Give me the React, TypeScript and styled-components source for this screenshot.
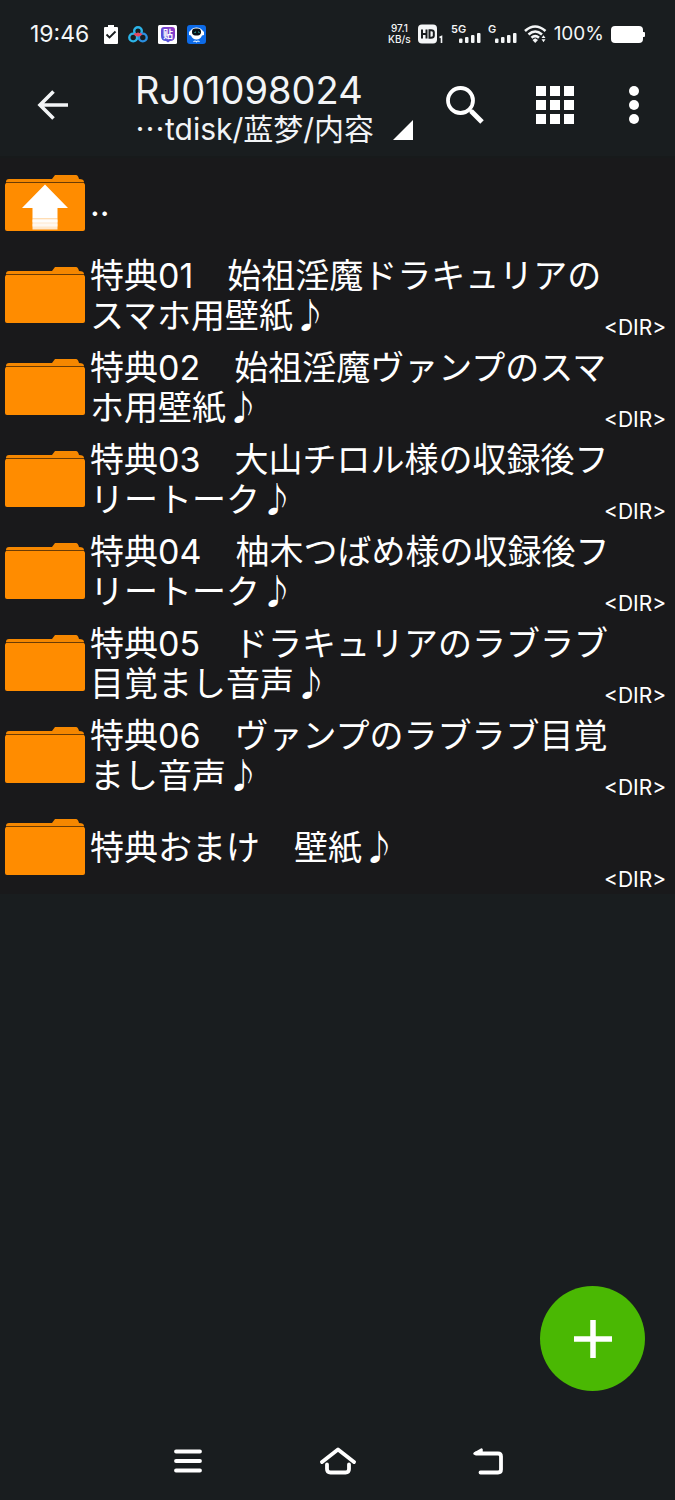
import React from "react";
import styled, { createGlobalStyle } from "styled-components";

const GlobalStyle = createGlobalStyle`
  *, *::before, *::after { box-sizing: border-box; }
  html { background: #191d1f; }
  body {
    margin: 0;
    color: #fff;
    font-family: Inter, "Noto Sans CJK JP", sans-serif;
  }
  button { font: inherit; color: inherit; }
`;

const Screen = styled.div`
  display: flex;
  flex-direction: column;
  min-height: 100vh;
  background: #191d1f;
`;

const StatusBar = styled.div`
  display: flex;
  align-items: center;
  justify-content: space-between;
  height: 68px;
  padding: 0 30px;
  color: #f4f6f7;
`;

const StatusGroup = styled.div<{ $gap: number }>`
  display: flex;
  align-items: center;
  gap: ${(p) => p.$gap}px;
`;

const Clock = styled.time`
  margin-right: 5px;
  font-size: 23px;
  line-height: 28px;
`;

const Speed = styled.div`
  font-size: 10px;
  line-height: 11px;
  font-weight: 500;
  text-align: center;
`;

const Battery = styled.span`
  font-size: 19px;
  line-height: 24px;
`;

const Toolbar = styled.header`
  display: flex;
  align-items: center;
  height: 90px;
  padding: 0 17px 14px 30px;
  border-bottom: 2px solid #171a1b;
  color: #f2f4f6;
`;

const IconButton = styled.button<{ $width: number }>`
  display: flex;
  flex: none;
  align-items: center;
  justify-content: center;
  width: ${(p) => p.$width}px;
  height: 60px;
  padding: 0;
  border: 0;
  background: none;
  cursor: pointer;
`;

const Location = styled.button`
  display: flex;
  flex: 1;
  align-items: flex-end;
  justify-content: space-between;
  min-width: 0;
  margin: 0 17px 0 59px;
  padding: 6px 0 0;
  border: 0;
  background: none;
  text-align: left;
  cursor: pointer;
`;

const LocationText = styled.span`
  display: flex;
  flex-direction: column;
  min-width: 0;
  white-space: nowrap;
`;

const FolderName = styled.span`
  font-size: 38px;
  line-height: 40px;
`;

const FolderPath = styled.span`
  font-family: Inter, "Noto Sans CJK SC", sans-serif;
  font-size: 30px;
  line-height: 34px;
`;

const Ellipsis = styled.span`
  font-family: "Noto Sans CJK SC", sans-serif;
`;

const Corner = styled.svg`
  flex: none;
  margin-bottom: 6px;
`;

const Actions = styled.div`
  display: flex;
`;

const FileList = styled.ul`
  margin: 0;
  padding: 0;
  list-style: none;
  background: #19191b;
`;

const Row = styled.li`
  display: flex;
  align-items: center;
  height: 92px;
  padding: 0 11px 0 5px;
`;

const FileLink = styled.a`
  display: flex;
  flex: 1;
  align-items: center;
  gap: 5px;
  min-width: 0;
  color: #fff;
  text-decoration: none;
`;

const FileName = styled.span`
  flex: 1;
  font-size: 34px;
  line-height: 40px;
`;

const Kind = styled.span`
  flex: none;
  align-self: flex-end;
  width: 60px;
  margin-left: -10px;
  font-size: 21px;
  line-height: 28px;
  text-align: right;
  white-space: nowrap;
`;

const AddButton = styled.button`
  position: fixed;
  right: 30px;
  bottom: 109px;
  display: flex;
  align-items: center;
  justify-content: center;
  width: 105px;
  height: 105px;
  padding: 0;
  border: 0;
  border-radius: 50%;
  background: #4ab803;
  cursor: pointer;
`;

const NavBar = styled.nav`
  display: flex;
  justify-content: center;
  gap: 90px;
  margin-top: auto;
  padding-bottom: 9px;
`;

const folders = [
  "特典01　始祖淫魔ドラキュリアのスマホ用壁紙♪",
  "特典02　始祖淫魔ヴァンプのスマホ用壁紙♪",
  "特典03　大山チロル様の収録後フリートーク♪",
  "特典04　柚木つばめ様の収録後フリートーク♪",
  "特典05　ドラキュリアのラブラブ目覚まし音声♪",
  "特典06　ヴァンプのラブラブ目覚まし音声♪",
  "特典おまけ　壁紙♪",
];

function FolderIcon({ up = false }: { up?: boolean }) {
  return (
    <svg width="80" height="58" viewBox="0 0 80 58" aria-hidden="true">
      <path d="M1 10V7q0-3 3-3h43l3-4h21q2 0 3 4 5 0 5 3v3z" fill="#f58700" />
      <rect y="8" width="80" height="48" rx="2" fill="#ff8c00" />
      <path d="M1 7.500h78" stroke="#6b3c05" strokeWidth="1" />
      {up && (
        <g fill="#fff">
          <path d="M40 9.500 63 33H52.500v10.500h-25V33H17z" />
          <path d="M27.500 43.500h25v11h-25z" opacity=".8" />
          <path d="M27.500 44.500h25v3h-25z" opacity=".9" />
          <path d="M27.500 48.500h25v3h-25z" opacity=".7" />
        </g>
      )}
    </svg>
  );
}

function ClipboardIcon() {
  return (
    <svg width="14" height="19" viewBox="0 0 14 19" aria-hidden="true">
      <path d="M1 2h3V0h6v2h3q1 0 1 1v15q0 1-1 1H1q-1 0-1-1V3q0-1 1-1z" fill="#fff" />
      <path d="m2.500 9.500 3 3 6-6" fill="none" stroke="#191d1f" strokeWidth="1.800" />
    </svg>
  );
}

function CloudDiskIcon() {
  return (
    <svg width="20" height="17" viewBox="0 0 20 17" fill="none" strokeWidth="2.400" aria-hidden="true">
      <circle cx="10" cy="5" r="3.800" stroke="#2cb4e8" />
      <circle cx="5.200" cy="11.500" r="3.900" stroke="#2cb4e8" />
      <circle cx="14.800" cy="11.500" r="3.900" stroke="#2a8fe0" />
      <path d="M6.500 7.500q1 1.500 3.500 1.500t3.500-1.500M8.500 10l1.500-2 1.500 2" stroke="#e8455c" />
    </svg>
  );
}

function ForumIcon() {
  return (
    <svg width="19" height="19" viewBox="0 0 19 19" aria-hidden="true">
      <defs>
        <linearGradient id="forum" x1="0" y1="1" x2="1" y2="0">
          <stop offset="0" stopColor="#3b5ae0" />
          <stop offset="1" stopColor="#9a35c4" />
        </linearGradient>
      </defs>
      <rect width="19" height="19" rx="1.500" fill="#fff" />
      <path d="M6 2h8q3 0 3 3v6q0 5-5 5l-2 1.500L8 16q-5 0-5-5V5q0-3 3-3z" fill="url(#forum)" />
      <text x="10" y="12.500" fill="#fff" fontFamily="Noto Sans CJK SC, sans-serif" fontSize="10" fontWeight="700" textAnchor="middle">贴</text>
    </svg>
  );
}

function RobotIcon() {
  return (
    <svg width="19" height="19" viewBox="0 0 19 19" aria-hidden="true">
      <rect width="19" height="19" rx="3" fill="#0d6be8" />
      <path d="M4 5q1.500-2.500 5.500-2.500T15 5l2 2v3l-2 .5q-1.500 4-5.500 4T4 10.500L2 10V7z" fill="#fff" />
      <path d="M6.500 16.800q1.500-1.600 3 0 1.500-1.600 3 0" fill="none" stroke="#dff0ff" strokeWidth="1.200" />
      <rect x="5" y="3.500" width="9" height="7" rx="3.400" fill="#071015" />
      <path d="M7.500 7.500q.5-1 1.500 0m2 0q.5-1 1.500 0" fill="none" stroke="#36c9b6" />
    </svg>
  );
}

function HdIcon() {
  return (
    <svg width="26" height="20" viewBox="0 0 26 20" aria-hidden="true">
      <rect y="0.500" width="19" height="19" rx="4" fill="#f4f6f7" />
      <path d="M4 5.500v9M8.500 5.500v9M4 10h4.500" fill="none" stroke="#191d1f" strokeWidth="2" />
      <path d="M11.500 6.300h1.500q2.800 0 2.800 2v3.400q0 2-2.800 2h-1.500z" fill="none" stroke="#191d1f" strokeWidth="2" />
      <path d="M21.500 13.500 23.500 12.500V19" fill="none" stroke="#f4f6f7" strokeWidth="1.600" />
    </svg>
  );
}

function SignalIcon({ label }: { label: string }) {
  const x = label.length > 1 ? 8 : 7;
  return (
    <svg width={x + 22} height="26" viewBox={`0 0 ${x + 22} 26`} fill="#f4f6f7" aria-hidden="true">
      <text x="0" y="12" fontFamily="Inter, sans-serif" fontSize="11" fontWeight="600">{label}</text>
      <rect x={x} y="17.500" width="3.500" height="4.500" rx="1" />
      <rect x={x + 6} y="16" width="3.500" height="6" rx="1" />
      <rect x={x + 12} y="14" width="3.500" height="8" rx="1" />
      <rect x={x + 18} y="12" width="3.500" height="10" rx="1" />
    </svg>
  );
}

function WifiIcon() {
  return (
    <svg width="23" height="18" viewBox="0 0 23 18" aria-hidden="true">
      <g fill="none" stroke="#f4f6f7" strokeWidth="2.600">
        <path d="M1 6q10-9 20.500 0" />
        <path d="M4.500 9.500q6.700-6 13.500 0" />
        <path d="M7.500 12.800q3.700-3.400 7.500 0" />
      </g>
      <path d="m8.500 15 2.700-1.800 2.800 1.800-2.800 3z" fill="#f4f6f7" />
      <path d="m17.500 13 2-2.800 2 2.800zM17.500 14.200h4l-2 3z" fill="#f4f6f7" />
    </svg>
  );
}

function BatteryIcon() {
  return (
    <svg width="34" height="17" viewBox="0 0 34 17" fill="#fff" aria-hidden="true">
      <rect width="32" height="17" rx="4" />
      <path d="M32 6h1q1 0 1 1v3q0 1-1 1h-1z" />
    </svg>
  );
}

export default function App() {
  return (
    <Screen>
      <GlobalStyle />
      <StatusBar>
        <StatusGroup $gap={10}>
          <Clock>19:46</Clock>
          <ClipboardIcon />
          <CloudDiskIcon />
          <ForumIcon />
          <RobotIcon />
        </StatusGroup>
        <StatusGroup $gap={7}>
          <Speed>97.1<br />KB/s</Speed>
          <HdIcon />
          <SignalIcon label="5G" />
          <SignalIcon label="G" />
          <WifiIcon />
          <Battery>100%</Battery>
          <BatteryIcon />
        </StatusGroup>
      </StatusBar>

      <Toolbar>
        <IconButton $width={46} aria-label="Back">
          <svg width="32" height="30" viewBox="0 0 32 30" fill="none" stroke="currentColor" strokeWidth="3.600">
            <path d="M31 15H3M16.500 1.500 3 15l13.500 13.500" />
          </svg>
        </IconButton>
        <Location>
          <LocationText>
            <FolderName>RJ01098024</FolderName>
            <FolderPath lang="zh-CN"><Ellipsis>…</Ellipsis>tdisk/蓝梦/内容</FolderPath>
          </LocationText>
          <Corner width="20" height="20" viewBox="0 0 20 20" aria-hidden="true">
            <path d="M20 0v20H0z" fill="#fff" />
          </Corner>
        </Location>
        <Actions>
          <IconButton $width={70} aria-label="Search">
            <svg width="38" height="38" viewBox="0 0 38 38" fill="none" stroke="#fff">
              <circle cx="14.500" cy="14.500" r="12.500" strokeWidth="3.800" />
              <path d="m23 23 3 3" strokeWidth="3" />
              <path d="m25 25 11 11" strokeWidth="5" />
            </svg>
          </IconButton>
          <IconButton $width={110} aria-label="Grid view">
            <svg width="38" height="38" viewBox="0 0 38 38" fill="#fff">
              {[0, 14, 28].map((y) =>
                [0, 14, 28].map((x) => <rect key={`${x}-${y}`} x={x} y={y} width="10" height="10" />)
              )}
            </svg>
          </IconButton>
          <IconButton $width={48} aria-label="More options">
            <svg width="10" height="38" viewBox="0 0 10 38" fill="#fff">
              <circle cx="5" cy="5" r="5" />
              <circle cx="5" cy="19" r="5" />
              <circle cx="5" cy="33" r="5" />
            </svg>
          </IconButton>
        </Actions>
      </Toolbar>

      <FileList>
        <Row>
          <FileLink href="#">
            <FolderIcon up />
            <FileName>..</FileName>
          </FileLink>
        </Row>
        {folders.map((name) => (
          <Row key={name}>
            <FileLink href="#">
              <FolderIcon />
              <FileName>{name}</FileName>
            </FileLink>
            <Kind>&lt;DIR&gt;</Kind>
          </Row>
        ))}
      </FileList>

      <AddButton aria-label="Add">
        <svg width="38" height="38" viewBox="0 0 38 38" stroke="#fff" strokeWidth="5.500">
          <path d="M0 19h38M19 0v38" />
        </svg>
      </AddButton>

      <NavBar>
        <IconButton $width={60} aria-label="Recent apps">
          <svg width="30" height="26" viewBox="0 0 30 26" stroke="#fff" strokeWidth="3.800" strokeLinecap="round">
            <path d="M3 3.500h24M3 13h24M3 22.500h24" />
          </svg>
        </IconButton>
        <IconButton $width={60} aria-label="Home">
          <svg width="36" height="28" viewBox="0 0 36 28" fill="none" stroke="#fff" strokeWidth="3.800" strokeLinecap="round" strokeLinejoin="round">
            <path d="M2 15 18 2.500 34 15" />
            <path d="M7 17.500V22q0 3.500 3.500 3.500h15Q29 25.500 29 22v-4.500" />
          </svg>
        </IconButton>
        <IconButton $width={60} aria-label="Go back">
          <svg width="32" height="28" viewBox="0 0 32 28" fill="none" stroke="#fff" strokeWidth="3.800" strokeLinecap="round" strokeLinejoin="round">
            <path d="M4 6.500h22q3 0 3 3v13q0 3-3 3H8.500" />
            <path d="M2.500 6.500 9.500 2.500v4z" fill="#fff" strokeWidth="2.500" />
          </svg>
        </IconButton>
      </NavBar>
    </Screen>
  );
}
